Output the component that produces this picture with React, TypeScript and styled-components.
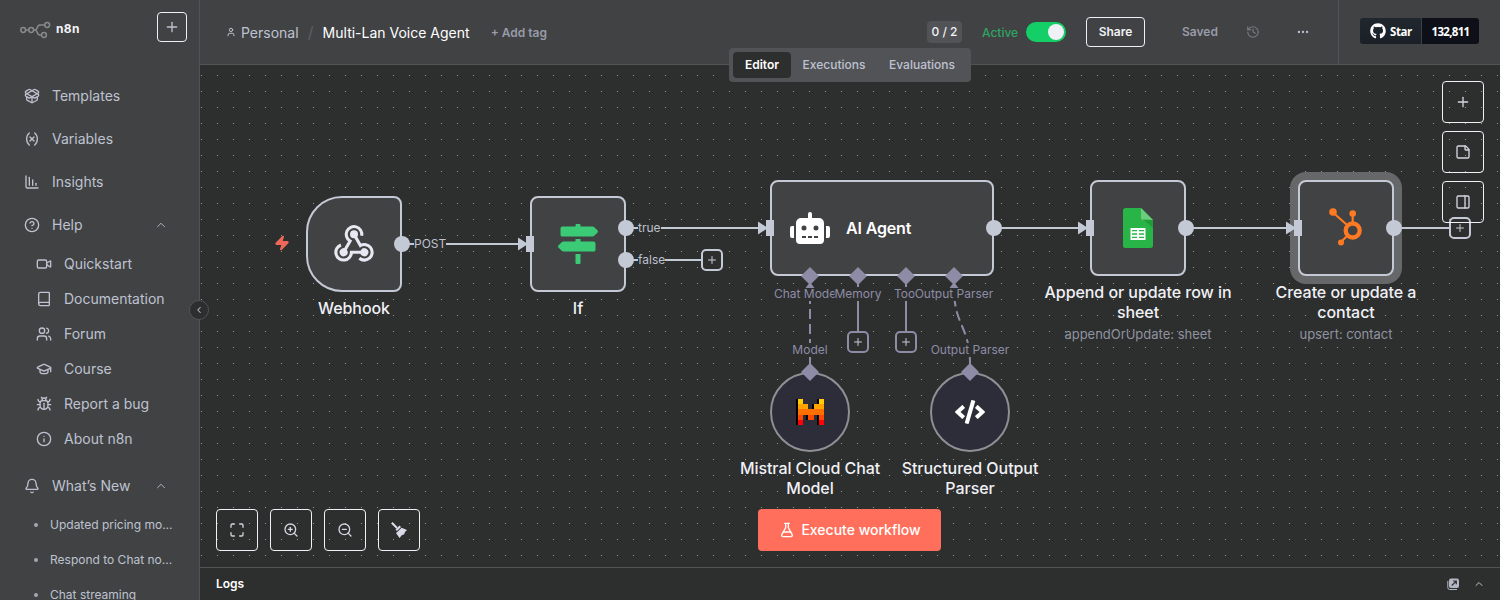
import React from 'react';
import styled, { createGlobalStyle, css } from 'styled-components';
import {
  Bell, Book, Bug, ChartColumnDecreasing, ChevronLeft, ChevronUp, CircleHelp, Ellipsis, FlaskConical,
  GraduationCap, History, Info, Maximize, PackageOpen, PanelRight, Plus,
  StickyNote, User, Users, Variable, Video, Zap, ZoomIn, ZoomOut,
} from 'lucide-react';
import { FaCode, FaGithub, FaMapSigns, FaRobot } from 'react-icons/fa';

const c = {
  panel: '#414244',
  canvas: '#2d2e2e',
  line: '#525356',
  text: '#bec2d0',
  bright: '#f0f1f6',
  edge: '#c3c9d5',
  aux: '#8d8ca6',
};

const GlobalStyle = createGlobalStyle`
  * { box-sizing: border-box; }
  body { margin: 0; background: ${c.canvas}; font-family: Inter, "Noto Sans", sans-serif; }
  svg { display: block; flex: none; }
`;

const Page = styled.div`
  display: flex;
  width: 1500px;
  height: 600px;
  overflow: hidden;
  color: ${c.text};
`;

/* ---------- sidebar ---------- */

const Sidebar = styled.aside`
  position: relative;
  flex: none;
  width: 200px;
  height: 600px;
  background: ${c.panel};
  border-right: 1px solid ${c.line};
`;

const SidebarTop = styled.div`
  display: flex;
  justify-content: space-between;
  height: 74px;
  padding: 12px 12px 0 20px;
`;

const Brand = styled.div`
  display: flex;
  align-items: center;
  gap: 5px;
  height: 35px;
  color: #f4f4f8;
  font: 700 12px Inter, sans-serif;
  letter-spacing: 0.4px;
`;

const BrandName = styled.span`
  padding-bottom: 2px;
`;

const AddButton = styled.button`
  display: flex;
  align-items: center;
  justify-content: center;
  width: 30px;
  height: 30px;
  padding: 0;
  color: ${c.text};
  background: none;
  border: 1px solid ${c.bright};
  border-radius: 4px;
`;

const NavItem = styled.div<{ $sub?: boolean; $gap?: boolean }>`
  display: flex;
  align-items: center;
  gap: 12px;
  height: ${(p) => (p.$sub ? 35 : 43)}px;
  margin-top: ${(p) => (p.$gap ? 8 : 0)}px;
  padding: 0 31px 0 ${(p) => (p.$sub ? 36 : 24)}px;
  font-size: 14px;
  line-height: 20px;
`;

const NavText = styled.span`
  flex: 1;
`;

const NewsItem = styled.div`
  display: flex;
  align-items: center;
  height: 35px;
  padding-left: 34px;
  font-size: 12px;
  white-space: nowrap;
  &::before {
    content: '';
    width: 4px;
    height: 4px;
    margin-right: 12px;
    border-radius: 50%;
    background: #a3a6b3;
  }
`;

const Collapse = styled.div`
  position: absolute;
  z-index: 5;
  top: 300px;
  left: 189px;
  display: flex;
  align-items: center;
  justify-content: center;
  width: 20px;
  height: 20px;
  background: ${c.canvas};
  border: 1px solid ${c.line};
  border-radius: 50%;
`;

/* ---------- header ---------- */

const Main = styled.main`
  position: relative;
  display: flex;
  flex-direction: column;
  flex: 1;
  min-width: 0;
`;

const Header = styled.header`
  display: flex;
  align-items: center;
  height: 65px;
  background: ${c.panel};
  border-bottom: 1px solid ${c.line};
`;

const Crumbs = styled.div`
  display: flex;
  align-items: center;
  flex: 1;
  padding: 0 0 0 26px;
  font-size: 14px;
  white-space: nowrap;
`;

const Owner = styled.span`
  display: flex;
  align-items: center;
  gap: 5px;
`;

const Slash = styled.span`
  width: 24px;
  color: #5d5e62;
  font-size: 16px;
  text-align: center;
`;

const FlowName = styled.span`
  color: #fff;
`;

const AddTag = styled.span`
  margin-left: 21px;
  color: #989ba8;
  font-size: 12px;
  font-weight: 600;
`;

const Actions = styled.div`
  display: flex;
  align-items: center;
  height: 64px;
`;

const Quota = styled.span`
  display: flex;
  justify-content: center;
  width: 35px;
  height: 22px;
  margin-right: 20px;
  color: ${c.bright};
  font-size: 12px;
  font-weight: 500;
  line-height: 21px;
  background: ${c.line};
  border-radius: 4px;
  white-space: nowrap;
`;

const ActiveText = styled.span`
  width: 44px;
  color: #2fa463;
  font-size: 12px;
  font-weight: 500;
`;

const Toggle = styled.span`
  display: flex;
  justify-content: flex-end;
  width: 40px;
  height: 20px;
  padding: 2px;
  margin-right: 20px;
  background: #14cf68;
  border-radius: 10px;
  &::after {
    content: '';
    width: 16px;
    height: 16px;
    border-radius: 50%;
    background: ${c.bright};
  }
`;

const ShareButton = styled.button`
  width: 59px;
  height: 30px;
  padding: 0 0 1px;
  color: ${c.bright};
  font: 600 12px Inter, sans-serif;
  background: none;
  border: 1px solid ${c.bright};
  border-radius: 4px;
`;

const Saved = styled.span`
  width: 64px;
  margin-left: 37px;
  padding-bottom: 1px;
  color: #989ba8;
  font-size: 12px;
  font-weight: 600;
`;

const IconSlot = styled.span<{ $w: number; $color: string }>`
  width: ${(p) => p.$w}px;
  color: ${(p) => p.$color};
`;

const GithubArea = styled.div`
  display: flex;
  align-items: center;
  width: 162px;
  height: 64px;
  padding: 0 0 2px 21px;
  border-left: 1px solid ${c.line};
`;

const GithubButton = styled.div`
  display: flex;
  height: 26px;
  color: #fff;
  font: 700 11.5px "Open Sans", sans-serif;
  letter-spacing: -0.4px;
  border-radius: 3px;
  overflow: hidden;
`;

const GithubStar = styled.span`
  display: flex;
  align-items: center;
  gap: 4px;
  width: 61px;
  padding-left: 10px;
  background: linear-gradient(#20272e, #1a2026);
`;

const GithubCount = styled.span`
  display: flex;
  align-items: center;
  justify-content: center;
  width: 58px;
  letter-spacing: -0.7px;
  background: #0d1018;
  border-left: 1px solid #3b4048;
`;

const Tabs = styled.nav`
  position: absolute;
  z-index: 3;
  top: 48px;
  left: 529px;
  display: flex;
  width: 242px;
  height: 34px;
  padding: 4px;
  background: ${c.line};
  border-radius: 4px;
`;

const Tab = styled.span<{ $active?: boolean; $w: number }>`
  display: flex;
  justify-content: center;
  width: ${(p) => p.$w}px;
  height: 26px;
  color: ${c.text};
  font-size: 12px;
  font-weight: 500;
  line-height: 25px;
  border-radius: 4px;
  ${(p) => p.$active && css`
    color: #fff;
    font-weight: 600;
    background: ${c.canvas};
  `}
`;

/* ---------- canvas ---------- */

const Canvas = styled.section`
  position: relative;
  height: 502px;
  overflow: hidden;
  background-color: ${c.canvas};
  background-image: radial-gradient(circle at 1.5px 0.5px, #969696 0.6px, transparent 0.8px);
  background-size: 16px 16px;
  background-position: 0 10px;
`;

/* Items inside share the workflow's own coordinate space. */
const Flow = styled.div`
  position: absolute;
  top: -65px;
  left: -200px;
  width: 1500px;
  height: 600px;
`;

const Edges = styled.svg`
  position: absolute;
  inset: 0;
`;

type Box = { $x: number; $y: number };

const NodeBox = styled.div<Box & { $w?: number; $trigger?: boolean; $selected?: boolean }>`
  position: absolute;
  left: ${(p) => p.$x}px;
  top: ${(p) => p.$y}px;
  display: flex;
  align-items: center;
  justify-content: center;
  width: ${(p) => p.$w ?? 96}px;
  height: 96px;
  color: #fff;
  background: ${c.panel};
  border: 2px solid ${c.edge};
  border-radius: ${(p) => (p.$trigger ? '36px 8px 8px 36px' : '8px')};
  box-shadow: ${(p) => (p.$selected ? '0 0 0 8px #666768' : 'none')};
`;

const AgentBox = styled(NodeBox)`
  justify-content: flex-start;
  gap: 16px;
  padding-left: 18px;
  font-size: 16px;
  font-weight: 600;
  letter-spacing: -0.15px;
`;

const RoundNode = styled.div<Box>`
  position: absolute;
  left: ${(p) => p.$x}px;
  top: ${(p) => p.$y}px;
  display: flex;
  align-items: center;
  justify-content: center;
  width: 80px;
  height: 80px;
  color: #fff;
  background: #2d2d3a;
  border: 2px solid #8f8f94;
  border-radius: 50%;
`;

const NodeLabel = styled.div<Box & { $w?: number }>`
  position: absolute;
  left: ${(p) => p.$x - (p.$w ?? 200) / 2}px;
  top: ${(p) => p.$y}px;
  width: ${(p) => p.$w ?? 200}px;
  color: ${c.bright};
  font-size: 16px;
  font-weight: 500;
  letter-spacing: -0.06px;
  line-height: 20px;
  text-align: center;
`;

const NodeNote = styled.div`
  margin-top: 2px;
  color: #8f939f;
  font-size: 13px;
  font-weight: 400;
  letter-spacing: 0;
`;

const EdgeLabel = styled.span<Box & { $aux?: boolean }>`
  position: absolute;
  left: ${(p) => p.$x}px;
  top: ${(p) => p.$y}px;
  height: 14px;
  color: ${(p) => (p.$aux ? c.aux : c.text)};
  font-size: 12px;
  line-height: 14px;
  white-space: nowrap;
  background: ${c.canvas};
  transform: ${(p) => (p.$aux ? 'translateX(-50%)' : 'none')};
`;

const PlusHandle = styled.div<Box & { $aux?: boolean }>`
  position: absolute;
  left: ${(p) => p.$x}px;
  top: ${(p) => p.$y}px;
  display: flex;
  align-items: center;
  justify-content: center;
  width: 22px;
  height: 22px;
  color: #c8ccd6;
  background: ${c.canvas};
  border: 2px solid ${(p) => (p.$aux ? c.aux : c.edge)};
  border-radius: 5px;
`;

const BoltMark = styled.div`
  position: absolute;
  left: 274px;
  top: 235px;
  color: #f0685a;
`;

const SideTools = styled.div`
  position: absolute;
  top: 16px;
  right: 16px;
  display: flex;
  flex-direction: column;
  gap: 8px;
`;

const BottomTools = styled.div`
  position: absolute;
  left: 16px;
  bottom: 16px;
  display: flex;
  gap: 12px;
`;

const ToolButton = styled.button`
  display: flex;
  align-items: center;
  justify-content: center;
  width: 42px;
  height: 42px;
  padding: 0;
  color: #d3d6e0;
  background: none;
  border: 1px solid ${c.bright};
  border-radius: 4px;
`;

const ExecuteButton = styled.button`
  position: absolute;
  left: 558px;
  bottom: 16px;
  display: flex;
  align-items: center;
  justify-content: center;
  gap: 6px;
  width: 183px;
  height: 42px;
  padding: 0 0 1px 1px;
  color: #fff;
  font: 500 14px Inter, sans-serif;
  background: #ff6f5c;
  border: 0;
  border-radius: 4px;
`;

const LogsBar = styled.footer`
  display: flex;
  align-items: center;
  gap: 13px;
  height: 33px;
  padding: 0 15px 0 16px;
  color: ${c.text};
  background: ${c.canvas};
  border-top: 1px solid ${c.line};
`;

const LogsTitle = styled.span`
  flex: 1;
  padding-bottom: 2px;
  color: #fff;
  font-size: 12px;
  font-weight: 600;
`;

/* ---------- drawings ---------- */

const BrandMark = () => (
  <svg width="31" height="18" viewBox="0 0 31 18" fill="none" stroke="#8a8a8c" strokeWidth="1.5">
    <circle cx="3.2" cy="9" r="2.4" />
    <circle cx="11.2" cy="9" r="2.4" />
    <circle cx="27.2" cy="4" r="2.4" />
    <circle cx="24" cy="14" r="2.4" />
    <path d="M5.6 9h3.2M13.6 9h1.6c2.6 0 1.4-5 4.6-5h5M15.2 9c2.6 0 1.4 5 4.6 5h1.8" />
  </svg>
);

const WebhookIcon = () => (
  <svg width="44" height="44" viewBox="-22 -22 44 44" fill="#e6e9f2">
    {[0, 120, 240].map((a) => (
      <g key={a} transform={`translate(0 2.3) rotate(${a})`}>
        <circle cx="0" cy="-12" r="4" />
        <path d="M-10.4 6L-3.9 -5.2A7.8 7.8 0 1 1 7.7 -10.6" fill="none" stroke="#e6e9f2" strokeWidth="3.1" />
      </g>
    ))}
  </svg>
);

const SheetsIcon = () => (
  <svg width="30" height="40" viewBox="0 0 30 40">
    <path d="M2.5 0H18l12 12v25.5a2.5 2.5 0 0 1-2.5 2.5h-25A2.5 2.5 0 0 1 0 37.5v-35A2.5 2.5 0 0 1 2.5 0z" fill="#28b446" />
    <path d="M18 0l12 12H20.5A2.5 2.5 0 0 1 18 9.5z" fill="#6ace7c" />
    <path d="M20 11.5L30 20v-8z" fill="#219b38" />
    <path d="M7.5 20h15v12h-15z" fill="#fff" />
    <path d="M9 22.7h5M16 22.7h5M9 26h5M16 26h5M9 29.3h5M16 29.3h5" stroke="#28b446" strokeWidth="1.3" />
  </svg>
);

const HubspotIcon = () => (
  <svg width="34" height="40" viewBox="1 1 34 40" fill="#ff7a22" stroke="#ff7a22">
    <circle cx="24.7" cy="23.5" r="7" fill="none" strokeWidth="4.3" />
    <path d="M24.7 16V6M18.5 17.5L5 5.5M19.5 28.5L13 35" fill="none" strokeWidth="2.2" />
    <circle cx="24.7" cy="6.5" r="3.3" stroke="none" />
    <circle cx="5" cy="5" r="3.8" stroke="none" />
    <circle cx="13" cy="35.5" r="3" stroke="none" />
  </svg>
);

const mistralRows: Array<[string, number[]]> = [
  ['#ffcd00', [0, 4]],
  ['#ffa300', [0, 1, 3, 4]],
  ['#ff7000', [0, 1, 2, 3, 4]],
  ['#ff4900', [0, 2, 4]],
  ['#ff0107', [0, 4]],
];

const MistralIcon = () => (
  <svg width="28" height="26" viewBox="0 0 28 26" shapeRendering="crispEdges">
    {mistralRows.map(([, cols], r) => cols.map((k) => (
      <rect key={`b${r}${k}`} x={k * 5.2} y={r * 5.2} width="5.2" height="5.2" fill="#000" />
    )))}
    {mistralRows.map(([fill, cols], r) => cols.map((k) => (
      <rect key={`f${r}${k}`} x={k * 5.2 + 2} y={r * 5.2} width="5.2" height="5.2" fill={fill} />
    )))}
  </svg>
);

const BroomIcon = () => (
  <svg width="16" height="16" viewBox="0 0 16 16" fill="#d9dce8">
    <path d="M0.8 0.8L6 6" stroke="#d9dce8" strokeWidth="2" />
    <path d="M4.5 7.5L8.5 3.5L10 5L6 9z" />
    <path d="M6.8 9.6L10.6 5.8L16 8L14 10L13 12.5L11 13L8.5 16L5 11z" />
  </svg>
);

const PopOutIcon = () => (
  <svg width="13" height="12" viewBox="0 0 13 12">
    <rect x="2" y="0.5" width="10" height="9.5" rx="2" fill="#b4b8c4" />
    <path d="M0.8 3v6.5a2 2 0 0 0 2 2H10" fill="none" stroke="#b4b8c4" strokeWidth="1" />
    <path d="M4.8 7.5L9 3.3M6 3h3.3v3.3" fill="none" stroke={c.canvas} strokeWidth="1.2" />
  </svg>
);

const Diamond = ({ x, y }: { x: number; y: number }) => (
  <path d={`M${x} ${y - 9}l9 9l-9 9l-9 -9z`} fill={c.aux} />
);

const Inlet = ({ x, y }: { x: number; y: number }) => (
  <g fill={c.edge}>
    <path d={`M${x - 12} ${y - 6.5}l10 6.5l-10 6.5z`} />
    <rect x={x - 4} y={y - 8} width="8" height="16" />
  </g>
);

const Wires = () => (
  <Edges width="1500" height="600" fill="none" strokeWidth="2">
    <g stroke={c.edge}>
      <path d="M402 244H522M626 228H762M626 260H701M994 228H1082M1186 228H1290M1394 228H1449" />
    </g>
    <g stroke={c.aux}>
      <path d="M858 276V331M906 276V331" />
      <path d="M810 364V284" strokeDasharray="10 5" />
      <path d="M970 364C970 326 954 326 954 288" strokeDasharray="10 5" />
    </g>
  </Edges>
);

const Ports = () => (
  <Edges width="1500" height="600">
    {[[402, 244], [626, 228], [626, 260], [994, 228], [1186, 228], [1394, 228]].map(([x, y]) => (
      <circle key={`${x}-${y}`} cx={x} cy={y} r="8" fill={c.edge} />
    ))}
    <Inlet x={530} y={244} />
    <Inlet x={770} y={228} />
    <Inlet x={1090} y={228} />
    <Inlet x={1298} y={228} />
    {[810, 858, 906, 954].map((x) => <Diamond key={x} x={x} y={276} />)}
    <path d="M810 282l4.5 6h-9zM954 282l4.5 6h-9z" fill={c.aux} />
    <Diamond x={810} y={372} />
    <Diamond x={970} y={372} />
  </Edges>
);

const icon = { size: 16, strokeWidth: 2 };

export default function App() {
  return (
    <Page>
      <GlobalStyle />
      <Sidebar>
        <SidebarTop>
          <Brand><BrandMark /><BrandName>n8n</BrandName></Brand>
          <AddButton><Plus {...icon} /></AddButton>
        </SidebarTop>
        <NavItem><PackageOpen {...icon} /><NavText>Templates</NavText></NavItem>
        <NavItem><Variable {...icon} /><NavText>Variables</NavText></NavItem>
        <NavItem><ChartColumnDecreasing {...icon} /><NavText>Insights</NavText></NavItem>
        <NavItem><CircleHelp {...icon} /><NavText>Help</NavText><ChevronUp size={14} strokeWidth={1.5} /></NavItem>
        <NavItem $sub><Video {...icon} /><NavText>Quickstart</NavText></NavItem>
        <NavItem $sub><Book {...icon} /><NavText>Documentation</NavText></NavItem>
        <NavItem $sub><Users {...icon} /><NavText>Forum</NavText></NavItem>
        <NavItem $sub><GraduationCap {...icon} /><NavText>Course</NavText></NavItem>
        <NavItem $sub><Bug {...icon} /><NavText>Report a bug</NavText></NavItem>
        <NavItem $sub><Info {...icon} /><NavText>About n8n</NavText></NavItem>
        <NavItem $gap><Bell {...icon} /><NavText>What’s New</NavText><ChevronUp size={14} strokeWidth={1.5} /></NavItem>
        <NewsItem>Updated pricing mo...</NewsItem>
        <NewsItem>Respond to Chat no...</NewsItem>
        <NewsItem>Chat streaming</NewsItem>
        <Collapse><ChevronLeft size={10} strokeWidth={2.5} /></Collapse>
      </Sidebar>
      <Main>
        <Header>
          <Crumbs>
            <Owner><User size={10} strokeWidth={2.4} />Personal</Owner>
            <Slash>/</Slash>
            <FlowName>Multi-Lan Voice Agent</FlowName>
            <AddTag>+ Add tag</AddTag>
          </Crumbs>
          <Actions>
            <Quota>0 / 2</Quota>
            <ActiveText>Active</ActiveText>
            <Toggle />
            <ShareButton>Share</ShareButton>
            <Saved>Saved</Saved>
            <IconSlot $w={50} $color="#77797f"><History size={14} strokeWidth={2} /></IconSlot>
            <IconSlot $w={42} $color={c.text}><Ellipsis size={14} /></IconSlot>
            <GithubArea>
              <GithubButton>
                <GithubStar><FaGithub size={16} />Star</GithubStar>
                <GithubCount>132,811</GithubCount>
              </GithubButton>
            </GithubArea>
          </Actions>
        </Header>
        <Tabs>
          <Tab $active $w={58}>Editor</Tab>
          <Tab $w={86}>Executions</Tab>
          <Tab $w={90}>Evaluations</Tab>
        </Tabs>
        <Canvas>
          <Flow>
            <Wires />
            <EdgeLabel $x={414} $y={237}>POST</EdgeLabel>
            <EdgeLabel $x={638} $y={221}>true</EdgeLabel>
            <EdgeLabel $x={638} $y={253}>false</EdgeLabel>
            <EdgeLabel $aux $x={806.5} $y={287}>Chat Model</EdgeLabel>
            <EdgeLabel $aux $x={858} $y={287}>Memory</EdgeLabel>
            <EdgeLabel $aux $x={906} $y={287}>Tool</EdgeLabel>
            <EdgeLabel $aux $x={954} $y={287}>Output Parser</EdgeLabel>
            <EdgeLabel $aux $x={810} $y={343}>Model</EdgeLabel>
            <EdgeLabel $aux $x={970} $y={343}>Output Parser</EdgeLabel>
            <BoltMark><Zap size={16} fill="currentColor" /></BoltMark>
            <NodeBox $x={306} $y={196} $trigger><WebhookIcon /></NodeBox>
            <NodeBox $x={530} $y={196}><FaMapSigns size={40} color="#3bcb76" /></NodeBox>
            <AgentBox $x={770} $y={180} $w={224}><FaRobot size={40} />AI Agent</AgentBox>
            <NodeBox $x={1090} $y={180}><SheetsIcon /></NodeBox>
            <NodeBox $x={1298} $y={180} $selected><HubspotIcon /></NodeBox>
            <RoundNode $x={770} $y={372}><MistralIcon /></RoundNode>
            <RoundNode $x={930} $y={372}><FaCode size={30} /></RoundNode>
            <Ports />
            <PlusHandle $x={701} $y={249}><Plus size={12} /></PlusHandle>
            <PlusHandle $x={1449} $y={217}><Plus size={12} /></PlusHandle>
            <PlusHandle $aux $x={847} $y={331}><Plus size={12} /></PlusHandle>
            <PlusHandle $aux $x={895} $y={331}><Plus size={12} /></PlusHandle>
            <NodeLabel $x={354} $y={298}>Webhook</NodeLabel>
            <NodeLabel $x={578} $y={298}>If</NodeLabel>
            <NodeLabel $x={1138} $y={282}>Append or update row in sheet<NodeNote>appendOrUpdate: sheet</NodeNote></NodeLabel>
            <NodeLabel $x={1346} $y={282} $w={160}>Create or update a contact<NodeNote>upsert: contact</NodeNote></NodeLabel>
            <NodeLabel $x={810} $y={458} $w={160}>Mistral Cloud Chat Model</NodeLabel>
            <NodeLabel $x={970} $y={458} $w={160}>Structured Output Parser</NodeLabel>
          </Flow>
          <SideTools>
            <ToolButton><Plus {...icon} /></ToolButton>
            <ToolButton><StickyNote {...icon} /></ToolButton>
            <ToolButton><PanelRight {...icon} /></ToolButton>
          </SideTools>
          <BottomTools>
            <ToolButton><Maximize {...icon} /></ToolButton>
            <ToolButton><ZoomIn {...icon} /></ToolButton>
            <ToolButton><ZoomOut {...icon} /></ToolButton>
            <ToolButton><BroomIcon /></ToolButton>
          </BottomTools>
          <ExecuteButton><FlaskConical size={16} strokeWidth={2} />Execute workflow</ExecuteButton>
        </Canvas>
        <LogsBar>
          <LogsTitle>Logs</LogsTitle>
          <PopOutIcon />
          <ChevronUp size={12} />
        </LogsBar>
      </Main>
    </Page>
  );
}
